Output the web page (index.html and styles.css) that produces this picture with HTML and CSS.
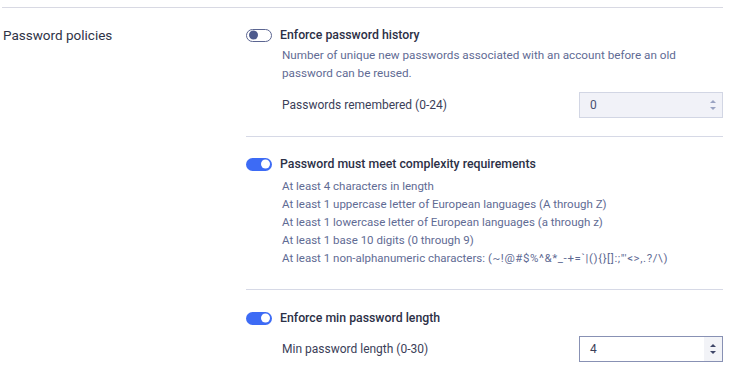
FILE: index.html
```html
<!DOCTYPE html>
<html>
<head>
<meta charset="utf-8">
<link rel="stylesheet" href="styles.css">
</head>
<body>
<div class="page">
  <div class="rule"></div>
  <div class="policy">
    <div class="label">Password policies</div>
    <div class="options">
      <div class="section first">
        <div class="head">
          <span class="toggle off"><span class="knob"></span></span>
          <span class="title">Enforce password history</span>
        </div>
        <div class="desc">Number of unique new passwords associated with an account before an old password can be reused.</div>
        <div class="field">
          <span class="field-label">Passwords remembered (0-24)</span>
          <div class="spin disabled">
            <span class="value">0</span>
            <span class="arrows">
              <svg width="8" height="14" viewBox="0 0 8 14"><path d="M1 5 L4 2 L7 5 Z" fill="#9aa3c2"/><path d="M1 9 L4 12 L7 9 Z" fill="#9aa3c2"/></svg>
            </span>
          </div>
        </div>
      </div>
      <div class="section second">
        <div class="head">
          <span class="toggle on"><span class="knob"></span></span>
          <span class="title">Password must meet complexity requirements</span>
        </div>
        <ul class="rules">
          <li>At least 4 characters in length</li>
          <li>At least 1 uppercase letter of European languages (A through Z)</li>
          <li>At least 1 lowercase letter of European languages (a through z)</li>
          <li>At least 1 base 10 digits (0 through 9)</li>
          <li>At least 1 non-alphanumeric characters: <span class="symbols">(~!@#$%^&amp;*_-+=`|(){}[]:;"'&lt;&gt;,.?/\)</span></li>
        </ul>
      </div>
      <div class="section third">
        <div class="head">
          <span class="toggle on"><span class="knob"></span></span>
          <span class="title">Enforce min password length</span>
        </div>
        <div class="field">
          <span class="field-label">Min password length (0-30)</span>
          <div class="spin active">
            <span class="value">4</span>
            <span class="arrows">
              <svg width="8" height="14" viewBox="0 0 8 14"><path d="M1 5 L4 2 L7 5 Z" fill="#3e4668"/><path d="M1 9 L4 12 L7 9 Z" fill="#3e4668"/></svg>
            </span>
          </div>
        </div>
      </div>
    </div>
  </div>
</div>
</body>
</html>
```
FILE: styles.css
```css
* { box-sizing: border-box; }
body {
  margin: 0;
  background: #ffffff;
  font-family: Roboto, "Noto Sans", sans-serif;
  font-size: 12px;
  color: #2c3046;
}
.page {
  width: 723px;
  padding-left: 2px;
  padding-top: 7px;
}
.rule {
  border-top: 1px solid #d8d9e3;
}
.policy {
  display: grid;
  grid-template-columns: 244px 477px;
}
.label {
  padding-top: 19px;
  font-size: 13.5px;
  line-height: 16px;
  padding-left: 1px;
  color: #2f3347;
}
.section {
  border-top: 1px solid #d6d9e6;
}
.section.first { border-top: none; padding-top: 19px; padding-bottom: 18px; }
.section.second { padding-top: 19px; padding-bottom: 22px; }
.section.third { padding-top: 20px; }
.head {
  display: flex;
  align-items: center;
  gap: 8px;
  height: 16px;
}
.title {
  font-weight: 500;
  font-size: 12.3px;
  color: #2c3046;
}
.toggle {
  position: relative;
  width: 26px;
  height: 13px;
  border-radius: 7px;
  flex: none;
}
.toggle.off {
  border: 1.5px solid #5b6591;
  background: #fff;
}
.toggle.on {
  background: #3d6bf5;
}
.knob {
  position: absolute;
  top: 50%;
  width: 9px;
  height: 9px;
  border-radius: 50%;
  transform: translateY(-50%);
}
.toggle.off .knob { left: 2px; background: #4e5a8c; }
.toggle.on .knob { right: 2px; background: #fff; }
.desc {
  padding-left: 36px;
  padding-top: 3px;
  line-height: 18px;
  font-size: 11.7px;
  color: #5f6b94;
  width: 440px;
}
.rules {
  list-style: none;
  margin: 0;
  padding: 5px 0 0 36px;
  line-height: 18px;
  font-size: 11.5px;
  color: #5f6b94;
}
.symbols {
  letter-spacing: 0.6px;
}
.field {
  display: flex;
  align-items: center;
  justify-content: space-between;
  padding-left: 36px;
  margin-top: 10px;
}
.field-label {
  color: #3b4058;
}
.spin {
  width: 144px;
  height: 26px;
  display: flex;
  align-items: stretch;
  justify-content: space-between;
}
.spin .value {
  padding-left: 10px;
  line-height: 24px;
  color: #3b4058;
}
.spin.disabled {
  background: #f1f2f8;
  border: 1px solid #d2d6e4;
}
.spin.disabled .value { color: #4a5070; }
.spin.active {
  background: #fff;
  border: 1px solid #8891b4;
}
.arrows {
  width: 18px;
  display: flex;
  align-items: center;
  justify-content: center;
}
.spin.active .arrows { background: #f2f3f7; }
```
